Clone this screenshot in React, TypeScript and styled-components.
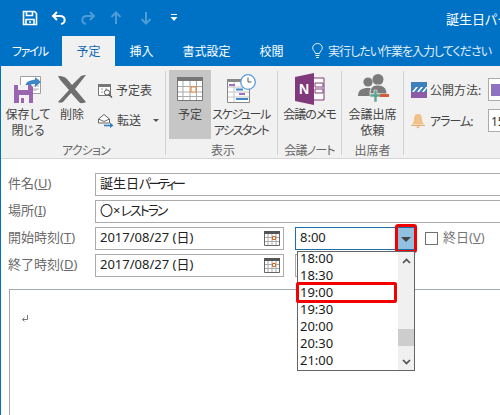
import React from 'react'
import styled, { createGlobalStyle } from 'styled-components'

const GlobalStyle = createGlobalStyle`
  html, body {
    margin: 0;
    padding: 0;
    width: 500px;
    height: 415px;
    overflow: hidden;
    background: #fff;
  }
  * { box-sizing: border-box; }
`

const BLUE = '#0072c6'
const RED = '#f50000'

const Window = styled.div`
  width: 500px;
  height: 415px;
  overflow: hidden;
  display: flex;
  flex-direction: column;
  border-left: 1px solid ${BLUE};
  font-family: "Noto Sans", "Noto Sans CJK JP", sans-serif;
  font-feature-settings: "palt";
  font-size: 12px;
  color: #444;
`

// the reference's UI font has much narrower kana than Noto
const Narrow = styled.span<{ $ls: number }>`
  letter-spacing: ${p => p.$ls}px;
`

const TitleBar = styled.div`
  flex: none;
  height: 36px;
  margin-left: -1px;
  background: ${BLUE};
  display: flex;
  align-items: center;
  white-space: nowrap;
  overflow: hidden;
`

const QuickButton = styled.div<{ $w: number; $dim?: boolean }>`
  flex: none;
  width: ${p => p.$w}px;
  height: 20px;
  display: flex;
  align-items: center;
  justify-content: center;
  opacity: ${p => (p.$dim ? 0.3 : 1)};
`

const Title = styled.div`
  flex: none;
  margin-left: 267px;
  font-size: 13px;
  color: #fff;
`

const TabRow = styled.div`
  flex: none;
  height: 30px;
  margin-left: -1px;
  padding-left: 12px;
  padding-bottom: 1px;
  background: ${BLUE};
  display: flex;
  align-items: stretch;
  white-space: nowrap;
`

const Tab = styled.div<{ $active?: boolean }>`
  padding: 0 14.5px;
  display: flex;
  align-items: center;
  margin-bottom: ${p => (p.$active ? -1 : 0)}px;
  background: ${p => (p.$active ? '#f1f1f1' : 'transparent')};
  color: ${p => (p.$active ? '#0c68b0' : '#fff')};
`

const FileTab = styled(Tab)`
  width: 50px;
  padding: 0;
  letter-spacing: -1.5px;
`

const TellMe = styled.div`
  display: flex;
  align-items: center;
  gap: 5px;
  margin-left: 14px;
  color: #e3eef8;
`

const Ribbon = styled.div`
  flex: none;
  height: 93px;
  padding-top: 4px;
  background: #f1f1f1;
  border-bottom: 1px solid #d6d6d6;
  display: flex;
  overflow: hidden;
`

const Group = styled.div<{ $w: number; $pad?: number }>`
  flex: none;
  width: ${p => p.$w}px;
  padding-left: ${p => p.$pad ?? 0}px;
  display: flex;
  flex-direction: column;
`

const GroupBody = styled.div<{ $center?: boolean }>`
  flex: none;
  height: 69px;
  display: flex;
  justify-content: ${p => (p.$center ? 'center' : 'flex-start')};
`

const GroupLabel = styled.div`
  margin-top: auto;
  height: 16px;
  line-height: 18px;
  text-align: center;
  color: #666;
`

const GroupRule = styled.div`
  flex: none;
  width: 1px;
  margin: 1px 0 3px;
  background: #d2d2d2;
`

const BigButton = styled.div<{ $w: number; $on?: boolean }>`
  flex: none;
  width: ${p => p.$w}px;
  height: 69px;
  display: flex;
  flex-direction: column;
  align-items: center;
  background: ${p => (p.$on ? '#c6c6c6' : 'transparent')};
  text-align: center;
  line-height: 16px;
  white-space: nowrap;
`

const IconSlot = styled.div`
  flex: none;
  height: 37px;
  display: flex;
  align-items: center;
  justify-content: center;
`

const SmallColumn = styled.div`
  flex: none;
  padding: 8px 0 0 2px;
  display: flex;
  flex-direction: column;
  gap: 6px;
`

const SmallButton = styled.div`
  height: 24px;
  display: flex;
  align-items: center;
  gap: 3px;
  white-space: nowrap;
`

const Caret = styled.span`
  width: 0;
  height: 0;
  margin-left: 9px;
  border-left: 3px solid transparent;
  border-right: 3px solid transparent;
  border-top: 3px solid #555;
`

const OptionGrid = styled.div`
  padding-top: 8px;
  display: grid;
  grid-template-columns: 19px 58px 60px;
  grid-auto-rows: 23px;
  row-gap: 8px;
  align-items: center;
  white-space: nowrap;
`

const OptionBox = styled.div`
  height: 23px;
  padding-left: 2px;
  background: #fff;
  border: 1px solid #ababab;
  display: flex;
  align-items: center;
  color: #333;
`

const Swatch = styled.div`
  width: 40px;
  height: 12px;
  background: #8f72c2;
`

const Form = styled.div`
  flex: 1;
  padding: 14px 0 0 7px;
  background: #fff;
  display: flex;
  flex-direction: column;
  gap: 4px;
  font-size: 13px;
  color: #222;
`

const Row = styled.div`
  display: flex;
  align-items: center;
  height: 23px;
`

const FieldLabel = styled.div`
  flex: none;
  width: 87px;
  padding-bottom: 4px;
  color: #6a6a6a;
  white-space: nowrap;
`

const TextField = styled.div`
  flex: 1;
  height: 23px;
  margin-right: -3px;
  padding: 0 0 5px 4px;
  border: 1px solid #ababab;
  display: flex;
  align-items: center;
  white-space: nowrap;
`

const DateField = styled(TextField)`
  flex: none;
  width: 189px;
  margin-right: 11px;
  padding: 0 3px 0 4px;
  justify-content: space-between;
`

const DateText = styled.span`
  padding-bottom: 5px;
`

const TimeCombo = styled.div`
  position: relative;
  flex: none;
  width: 120px;
  height: 23px;
  display: flex;
`

const TimeField = styled.div<{ $focus?: boolean }>`
  flex: 1;
  padding: 0 0 4px 4px;
  border: 1px solid ${p => (p.$focus ? '#1a6fa8' : '#ababab')};
  display: flex;
  align-items: center;
`

const DropButton = styled.div`
  flex: none;
  width: 18px;
  background: #92c0e0;
  border: 1px solid #1a6fa8;
  border-left: none;
  display: flex;
  align-items: center;
  justify-content: center;
`

const DropArrow = styled.span`
  width: 0;
  height: 0;
  margin-top: 1px;
  border-left: 5px solid transparent;
  border-right: 5px solid transparent;
  border-top: 5px solid #444;
`

const RedFrame = styled.div`
  position: absolute;
  top: -3px;
  right: -2px;
  width: 22px;
  height: 29px;
  border: 3px solid ${RED};
  border-radius: 3px;
`

const AllDay = styled.div`
  flex: none;
  margin-left: 10px;
  padding-bottom: 4px;
  display: flex;
  align-items: center;
  gap: 5px;
  color: #777;
  white-space: nowrap;
`

const CheckBox = styled.div`
  width: 13px;
  height: 13px;
  margin-top: 4px;
  background: #fff;
  border: 1px solid #707070;
`

const DropList = styled.div`
  position: absolute;
  z-index: 2;
  top: 24px;
  left: 2px;
  width: 118px;
  height: 120px;
  background: #fff;
  border: 1px solid #646464;
  display: flex;
`

const Options = styled.div`
  position: relative;
  flex: 1;
  padding-left: 2px;
`

const Option = styled.div`
  height: 17px;
  line-height: 12px;
  color: #1a1a1a;
`

const OptionMark = styled.div`
  position: absolute;
  top: 30px;
  left: -2px;
  width: 101px;
  height: 21px;
  border: 3px solid ${RED};
  border-radius: 2px;
`

const ScrollBar = styled.div`
  flex: none;
  width: 16px;
  background: #f0f0f0;
  display: flex;
  flex-direction: column;
`

const ScrollEnd = styled.div`
  flex: none;
  height: 17px;
  display: flex;
  align-items: center;
  justify-content: center;
`

const ScrollTrack = styled.div`
  flex: 1;
  padding-top: 60px;
`

const ScrollThumb = styled.div`
  height: 17px;
  background: #cdcdcd;
`

const Body = styled.div`
  flex: 1;
  margin: 8px -3px 0 1px;
  padding: 25px 0 0 11px;
  border: 1px solid #a2a9b3;
  border-bottom: none;
`

const SaveIcon = () => (
  <svg width="16" height="16" viewBox="0 0 16 16" fill="none" stroke="#fff" strokeWidth="1.6">
    <path d="M1.5 1.5h11l2 2v11h-13z" />
    <path d="M4.5 1.5v4h6v-4M4 14.5v-5h8v5" />
    <path d="M7 12h2" />
  </svg>
)

const UndoIcon = ({ flip }: { flip?: boolean }) => (
  <svg width="16" height="14" viewBox="0 0 16 14" fill="none" stroke="#fff" strokeWidth="2" style={flip ? { transform: 'scaleX(-1)' } : undefined}>
    <path d="M6 1L2 5l4 4" />
    <path d="M2 5h7c6 0 6 7 1 8" />
  </svg>
)

const ArrowIcon = ({ down }: { down?: boolean }) => (
  <svg width="12" height="14" viewBox="0 0 12 14" fill="none" stroke="#fff" strokeWidth="2" style={down ? { transform: 'scaleY(-1)' } : undefined}>
    <path d="M1.5 6L6 1.5 10.5 6M6 2v11" />
  </svg>
)

const CustomizeIcon = () => (
  <svg width="8" height="8" viewBox="0 0 8 8" fill="#fff">
    <rect x="1" y="0" width="6" height="1" />
    <path d="M0.5 3h7L4 7z" />
  </svg>
)

const BulbIcon = () => (
  <svg width="11" height="16" viewBox="0 0 11 16" fill="none" stroke="#e8f1f8" strokeWidth="1">
    <path d="M3.5 10.5C3 8 .7 7.5.7 4.9a4.8 4.4 0 0 1 9.6 0c0 2.6-2.3 3.1-2.8 5.6z" />
    <path d="M3.5 12.5h4M4 14.5h3" />
  </svg>
)

const SaveCloseIcon = () => (
  <svg width="32" height="32" viewBox="0 0 32 32">
    <path d="M8.5 3.5h20v17h-20z" fill="#fff" stroke="#a0a0a0" />
    <path d="M21 7h6M21 10h6M21 13h6M21 16h6M11 17h14" stroke="#b4b4b4" />
    <path d="M13 15c0-6 4-8 10-8V4l6 5-6 5v-3c-4 0-6 1-7 4z" fill="#3f87c9" />
    <path d="M2 12h17l2 2v16H2z" fill="#9b64b1" />
    <path d="M6 12h10v5H6z" fill="#f1f1f1" />
    <path d="M7 22h10v8H7z" fill="#f1f1f1" />
    <path d="M9 25h3v5H9z" fill="#9b64b1" />
  </svg>
)

const DeleteIcon = () => (
  <svg width="30" height="30" viewBox="0 0 30 30">
    <path d="M1 2c3 0 6 0 9 3l5 6 9-9c2-1 4-1 5-1L18 15l11 13c-2 1-5 2-7 0l-8-9-8 9c-2 1-4 1-5 0L12 16 5 8C3 6 2 4 1 2z" fill="#6f6f6f" />
  </svg>
)

const AgendaIcon = () => (
  <svg width="16" height="15" viewBox="0 0 16 15" fill="none">
    <path d="M1.5 1.5h12v11h-12z" fill="#fff" stroke="#777" />
    <path d="M1 1h13v3H1z" fill="#777" />
    <path d="M4 6h2M8 6h2M4 9h2" stroke="#999" />
    <circle cx="10" cy="9.5" r="2.6" fill="#fff" stroke="#555" />
    <path d="M12 11.5l3 3" stroke="#555" strokeWidth="1.5" />
  </svg>
)

const ForwardIcon = () => (
  <svg width="17" height="15" viewBox="0 0 17 15" fill="none">
    <path d="M1.5 6L7 1.5 12.5 6v4h-11z" fill="#fff" stroke="#666" />
    <path d="M1.5 6L7 8.5 12.5 6" stroke="#666" />
    <path d="M7 12.5h7" stroke="#2f7fc4" strokeWidth="1.6" />
    <path d="M13 9.5l3.5 3-3.5 2.5z" fill="#2f7fc4" />
  </svg>
)

const CalendarIcon = () => (
  <svg width="26" height="24" viewBox="0 0 26 24" fill="none">
    <path d="M.5 .5h25v23H.5z" fill="#fff" stroke="#777" />
    <path d="M0 0h26v4H0z" fill="#777" />
    <path d="M6 4v19M13 4v19M19.5 4v19M1 9.5h24M1 15h24M1 19.5h24" stroke="#aaa" />
    <path d="M14 10h5v5h-5z" fill="#fff" stroke="#e8893c" strokeWidth="1.2" />
  </svg>
)

const ScheduleIcon = () => (
  <svg width="30" height="30" viewBox="0 0 30 30" fill="none">
    <path d="M1.5 5.5h22v23h-22z" fill="#fff" stroke="#888" />
    <path d="M1 5h23v3H1z" fill="#888" />
    <path d="M2 13h21M2 18h21M2 23h21M8 8v20" stroke="#c4c4c4" />
    <path d="M3 10h6v2H3zM13 19h6v2h-6z" fill="#a270c0" />
    <path d="M10 14.5h7v2h-7zM10 24h12v2H10z" fill="#3f87c9" />
    <circle cx="22" cy="8" r="7.3" fill="#fff" stroke="#5c9bd4" strokeWidth="1.3" />
    <path d="M22 3.5V8h3.5" stroke="#555" />
  </svg>
)

const OneNoteIcon = () => (
  <svg width="32" height="32" viewBox="0 0 32 32">
    <path d="M18 5h12v22H18z" fill="#fff" stroke="#80397b" />
    <path d="M21 10h8v4h-8zM21 16h8v4h-8z" fill="none" stroke="#80397b" />
    <path d="M1 4L20 0v32L1 28z" fill="#80397b" />
    <text x="5" y="21" fill="#fff" fontFamily="Liberation Sans, sans-serif" fontWeight="700" fontSize="14">N</text>
  </svg>
)

const PeopleIcon = () => (
  <svg width="32" height="30" viewBox="0 0 32 30">
    <circle cx="11" cy="8" r="4.6" fill="#7b7b7b" />
    <path d="M1 22c0-6 4-8 10-8s8 2 8 8z" fill="#7b7b7b" />
    <circle cx="21" cy="5.5" r="5.5" fill="#7b7b7b" />
    <path d="M13 20c0-7 3-9 8-9s9 3 9 9z" fill="#7b7b7b" stroke="#f1f1f1" />
    <path d="M13 20h4v-4h3v4h4v3h-4v5h-3v-5h-4z" fill="#5fa38f" stroke="#f1f1f1" strokeWidth=".6" />
    <path d="M23 20h9v3h-9z" fill="#d9593d" />
  </svg>
)

const PrivacyIcon = () => (
  <svg width="16" height="16" viewBox="0 0 16 16">
    <path d="M0 0h16v11H0z" fill="#3f7fbc" />
    <path d="M1 10l4-5h2l-4 5zM6 10l4-5h2l-4 5zM11 10l4-5h1v1l-3 4z" fill="#fff" />
    <path d="M0 10h16v6H0z" fill="#8d5aa8" />
  </svg>
)

const BellIcon = () => (
  <svg width="14" height="16" viewBox="0 0 14 16">
    <path d="M7 1c-3 0-4 2-4 5 0 2-1 4-2 5.500h12C12 10 11 8 11 6c0-3-1-5-4-5z" fill="#f2c189" />
    <path d="M0 12h14v1H0z" fill="#e6ad72" />
    <path d="M5 13.500h4L7 15.500z" fill="#e6ad72" />
  </svg>
)

const SmallCalendar = () => (
  <svg width="16" height="15" viewBox="0 0 16 15" fill="none">
    <path d="M.5 .5h15v14H.5z" fill="#fff" stroke="#666" />
    <path d="M0 0h16v3H0z" fill="#555" />
    <path d="M4 3v11M8 3v11M12 3v11M1 6.500h14M1 10.500h14" stroke="#aaa" />
    <path d="M8.500 5.500h3v3h-3z" fill="#fff" stroke="#d0661c" />
  </svg>
)

const ReturnMark = () => (
  <svg width="8" height="8" viewBox="0 0 8 8" fill="none" stroke="#777" style={{ display: 'block' }}>
    <path d="M6.500 0v4.500H1.500" />
    <path d="M3.500 2.500L1.500 4.500l2 2" />
  </svg>
)

const Chevron = ({ down }: { down?: boolean }) => (
  <svg width="9" height="6" viewBox="0 0 9 6" fill="none" stroke="#505050" strokeWidth="1.700" style={down ? { transform: 'scaleY(-1)' } : undefined}>
    <path d="M1 5l3.500-3.500L8 5" />
  </svg>
)

const times = ['18:00', '18:30', '19:00', '19:30', '20:00', '20:30', '21:00']

const App: React.FC = () => {
  return (
    <Window>
      <GlobalStyle />
      <TitleBar>
        <QuickButton $w={22} />
        <QuickButton $w={16}><SaveIcon /></QuickButton>
        <QuickButton $w={13} />
        <QuickButton $w={16}><UndoIcon /></QuickButton>
        <QuickButton $w={13} />
        <QuickButton $w={16} $dim><UndoIcon flip /></QuickButton>
        <QuickButton $w={13} />
        <QuickButton $w={14} $dim><ArrowIcon /></QuickButton>
        <QuickButton $w={16} />
        <QuickButton $w={14} $dim><ArrowIcon down /></QuickButton>
        <QuickButton $w={16} />
        <QuickButton $w={10}><CustomizeIcon /></QuickButton>
        <Title>誕生日パーティー - 予定</Title>
      </TitleBar>
      <TabRow>
        <FileTab>ファイル</FileTab>
        <Tab $active>予定</Tab>
        <Tab>挿入</Tab>
        <Tab>書式設定</Tab>
        <Tab>校閲</Tab>
        <TellMe><BulbIcon /><Narrow $ls={-1}>実行したい作業を入力してください</Narrow></TellMe>
      </TabRow>
      <Ribbon>
        <Group $w={164} $pad={6}>
          <GroupBody>
            <BigButton $w={42}><IconSlot><SaveCloseIcon /></IconSlot>保存して<br />閉じる</BigButton>
            <BigButton $w={46}><IconSlot><DeleteIcon /></IconSlot>削除</BigButton>
            <SmallColumn>
              <SmallButton><AgendaIcon />予定表</SmallButton>
              <SmallButton><ForwardIcon />転送<Caret /></SmallButton>
            </SmallColumn>
          </GroupBody>
          <GroupLabel><Narrow $ls={-0.8}>アクション</Narrow></GroupLabel>
        </Group>
        <GroupRule />
        <Group $w={111} $pad={3}>
          <GroupBody>
            <BigButton $w={42} $on><IconSlot><CalendarIcon /></IconSlot>予定</BigButton>
            <BigButton $w={60}><IconSlot><ScheduleIcon /></IconSlot><Narrow $ls={-1.4}>スケジュール<br />アシスタント</Narrow></BigButton>
          </GroupBody>
          <GroupLabel>表示</GroupLabel>
        </Group>
        <GroupRule />
        <Group $w={63}>
          <GroupBody $center>
            <BigButton $w={60}><IconSlot><OneNoteIcon /></IconSlot><Narrow $ls={-1}>会議のメモ</Narrow></BigButton>
          </GroupBody>
          <GroupLabel><Narrow $ls={-0.8}>会議ノート</Narrow></GroupLabel>
        </Group>
        <GroupRule />
        <Group $w={61}>
          <GroupBody $center>
            <BigButton $w={56}><IconSlot><PeopleIcon /></IconSlot>会議出席<br />依頼</BigButton>
          </GroupBody>
          <GroupLabel>出席者</GroupLabel>
        </Group>
        <GroupRule />
        <Group $w={120} $pad={7}>
          <OptionGrid>
            <PrivacyIcon />
            <span>公開方法:</span>
            <OptionBox><Swatch /></OptionBox>
            <BellIcon />
            <Narrow $ls={-1}>アラーム:</Narrow>
            <OptionBox>15 分</OptionBox>
          </OptionGrid>
        </Group>
      </Ribbon>
      <Form>
        <Row>
          <FieldLabel>件名(<u>U</u>)</FieldLabel>
          <TextField><span>誕生日<Narrow $ls={-3}>パーティー</Narrow></span></TextField>
        </Row>
        <Row>
          <FieldLabel>場所(<u>I</u>)</FieldLabel>
          <TextField><span>〇×<Narrow $ls={-2}>レストラン</Narrow></span></TextField>
        </Row>
        <Row>
          <FieldLabel>開始時刻(<u>T</u>)</FieldLabel>
          <DateField><DateText>2017/08/27 (日)</DateText><SmallCalendar /></DateField>
          <TimeCombo>
            <TimeField $focus>8:00</TimeField>
            <DropButton><DropArrow /></DropButton>
            <RedFrame />
            <DropList>
              <Options>
                {times.map(t => <Option key={t}>{t}</Option>)}
                <OptionMark />
              </Options>
              <ScrollBar>
                <ScrollEnd><Chevron /></ScrollEnd>
                <ScrollTrack><ScrollThumb /></ScrollTrack>
                <ScrollEnd><Chevron down /></ScrollEnd>
              </ScrollBar>
            </DropList>
          </TimeCombo>
          <AllDay><CheckBox /><span>終日(<u>V</u>)</span></AllDay>
        </Row>
        <Row>
          <FieldLabel>終了時刻(<u>D</u>)</FieldLabel>
          <DateField><DateText>2017/08/27 (日)</DateText><SmallCalendar /></DateField>
          <TimeCombo><TimeField /></TimeCombo>
        </Row>
        <Body><ReturnMark /></Body>
      </Form>
    </Window>
  )
}

export default App
